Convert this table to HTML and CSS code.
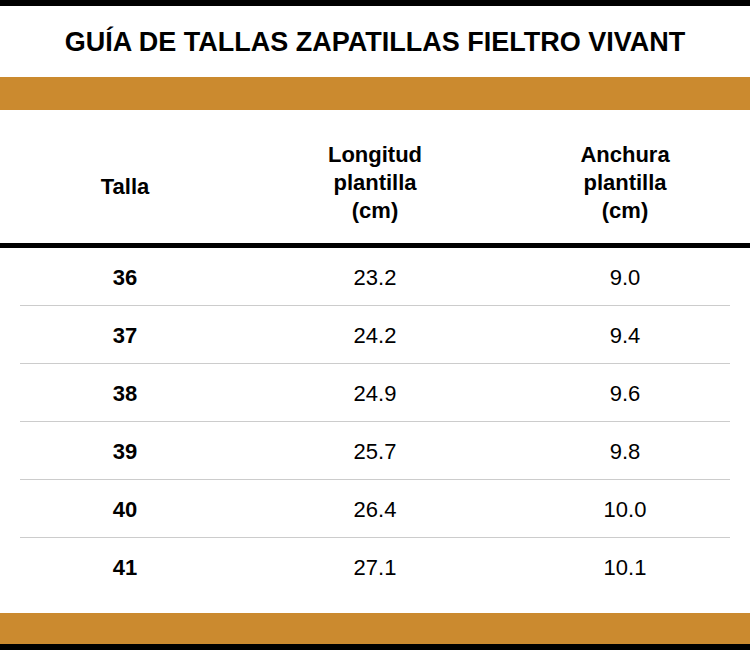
FILE: index.html
```html
<!DOCTYPE html>
<html lang="es">
<head>
<meta charset="utf-8">
<title>Guía de tallas</title>
<link rel="stylesheet" href="styles.css">
</head>
<body>
<div class="page">
  <div class="bar-black top"></div>
  <h1 class="title">GUÍA DE TALLAS ZAPATILLAS FIELTRO VIVANT</h1>
  <div class="band"></div>
  <div class="thead">
    <div class="th th-single">Talla</div>
    <div class="th">Longitud<br>plantilla<br>(cm)</div>
    <div class="th">Anchura<br>plantilla<br>(cm)</div>
  </div>
  <div class="tbody">
    <div class="tr"><div class="td size">36</div><div class="td">23.2</div><div class="td">9.0</div></div>
    <div class="sep"></div>
    <div class="tr"><div class="td size">37</div><div class="td">24.2</div><div class="td">9.4</div></div>
    <div class="sep"></div>
    <div class="tr"><div class="td size">38</div><div class="td">24.9</div><div class="td">9.6</div></div>
    <div class="sep"></div>
    <div class="tr"><div class="td size">39</div><div class="td">25.7</div><div class="td">9.8</div></div>
    <div class="sep"></div>
    <div class="tr"><div class="td size">40</div><div class="td">26.4</div><div class="td">10.0</div></div>
    <div class="sep"></div>
    <div class="tr"><div class="td size">41</div><div class="td">27.1</div><div class="td">10.1</div></div>
  </div>
  <div class="band band-bottom"></div>
  <div class="bar-black bottom"></div>
</div>
</body>
</html>
```
FILE: styles.css
```css
html, body {
  margin: 0;
  padding: 0;
  background: #ffffff;
}
body {
  font-family: "Liberation Sans", Arial, sans-serif;
  color: #000;
}
.page {
  width: 750px;
  height: 650px;
  display: flex;
  flex-direction: column;
}
.bar-black {
  background: #000;
}
.bar-black.top {
  height: 6px;
}
.bar-black.bottom {
  height: 6px;
}
.title {
  margin: 0;
  height: 71px;
  display: flex;
  align-items: center;
  justify-content: center;
  font-size: 27px;
  font-weight: 700;
  padding-top: 2px;
  box-sizing: border-box;
}
.band {
  height: 33px;
  background: #cb8a2f;
}
.band-bottom {
  height: 31px;
}
.thead {
  display: grid;
  grid-template-columns: repeat(3, 1fr);
  align-items: center;
  padding: 31px 0 18px;
  border-bottom: 5px solid #000;
}
.th {
  text-align: center;
  font-size: 22px;
  font-weight: 700;
  line-height: 28px;
}
.th-single {
  padding-top: 8px;
}
.tbody {
  padding-bottom: 18px;
}
.tr {
  display: grid;
  grid-template-columns: repeat(3, 1fr);
  height: 57px;
  align-items: center;
}
.td {
  text-align: center;
  font-size: 22px;
  padding-top: 3px;
}
.td.size {
  font-weight: 700;
}
.sep {
  height: 1px;
  background: #cccccc;
  margin: 0 20px;
}
```
